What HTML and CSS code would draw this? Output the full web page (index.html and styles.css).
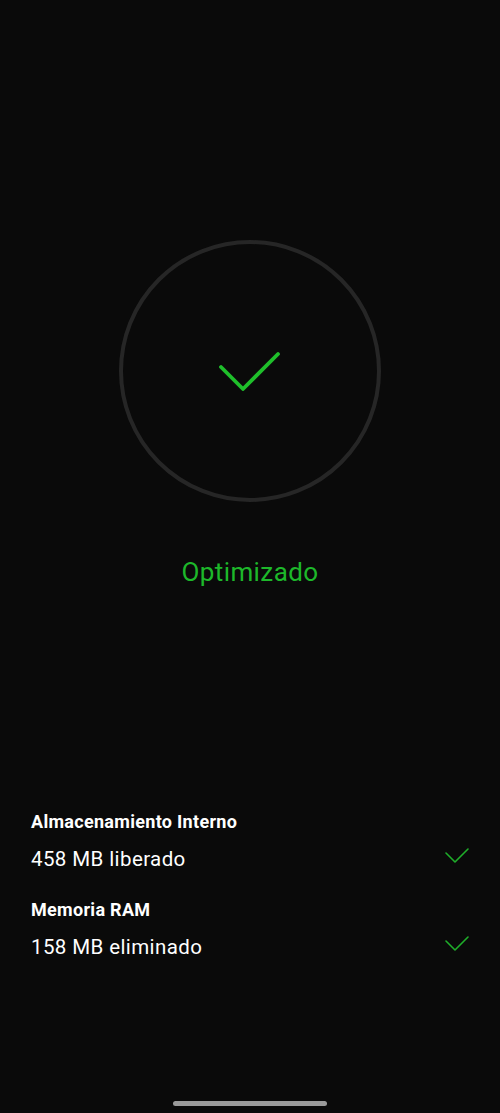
FILE: index.html
```html
<!DOCTYPE html>
<html lang="es">
<head>
    <meta charset="UTF-8">
    <meta name="viewport" content="width=device-width, initial-scale=1.0">
    <title>Optimizado</title>
    <link rel="stylesheet" href="styles.css">
</head>
<body>
    <div class="screen">
        <div class="status">
            <div class="ring">
                <svg class="big-check" width="62" height="40" viewBox="0 0 62 40">
                    <polyline points="2,16 24,38 59,3" fill="none" stroke="#1fbf2b" stroke-width="3.8" stroke-linecap="round" stroke-linejoin="round"/>
                </svg>
            </div>
            <p class="status-text">Optimizado</p>
        </div>

        <div class="results">
            <div class="result">
                <h3 class="result-title">Almacenamiento Interno</h3>
                <div class="result-row">
                    <span class="result-value">458 MB liberado</span>
                    <svg class="small-check" width="24" height="16" viewBox="0 0 24 16">
                        <polyline points="1,6 10,15 23,2" fill="none" stroke="#1fae2a" stroke-width="1.6" stroke-linecap="round" stroke-linejoin="round"/>
                    </svg>
                </div>
            </div>
            <div class="result">
                <h3 class="result-title">Memoria RAM</h3>
                <div class="result-row">
                    <span class="result-value">158 MB eliminado</span>
                    <svg class="small-check" width="24" height="16" viewBox="0 0 24 16">
                        <polyline points="1,6 10,15 23,2" fill="none" stroke="#1fae2a" stroke-width="1.6" stroke-linecap="round" stroke-linejoin="round"/>
                    </svg>
                </div>
            </div>
        </div>

        <div class="home-bar"></div>
    </div>
</body>
</html>
```

FILE: styles.css
```css
html, body {
    margin: 0;
    padding: 0;
    background: #0a0a0a;
}

body {
    font-family: Roboto, "Noto Sans", sans-serif;
    color: #fff;
}

.screen {
    display: flex;
    flex-direction: column;
    height: 1113px;
}

.status {
    display: flex;
    flex-direction: column;
    align-items: center;
    padding-top: 240px;
}

.ring {
    width: 254px;
    height: 254px;
    border: 4px solid #262626;
    border-radius: 50%;
    display: flex;
    align-items: center;
    justify-content: center;
}

.status-text {
    margin: 55px 0 0;
    font-size: 26px;
    line-height: 30px;
    color: #1db82a;
    letter-spacing: 0.4px;
}

.results {
    margin-top: 223px;
    padding: 0 31px;
}

.result {
    margin-bottom: 25px;
}

.result-title {
    margin: 0;
    font-size: 18px;
    font-weight: 700;
    line-height: 24px;
    letter-spacing: 0.3px;
}

.result-row {
    display: flex;
    align-items: flex-start;
    justify-content: space-between;
    margin-top: 11px;
    height: 28px;
}

.result-value {
    font-size: 20.5px;
    line-height: 28px;
    letter-spacing: 0.4px;
}

.small-check {
    margin-top: 2px;
}

.home-bar {
    margin: auto auto 7px;
    width: 154px;
    height: 5px;
    border-radius: 3px;
    background: #9a9a9a;
}
```
